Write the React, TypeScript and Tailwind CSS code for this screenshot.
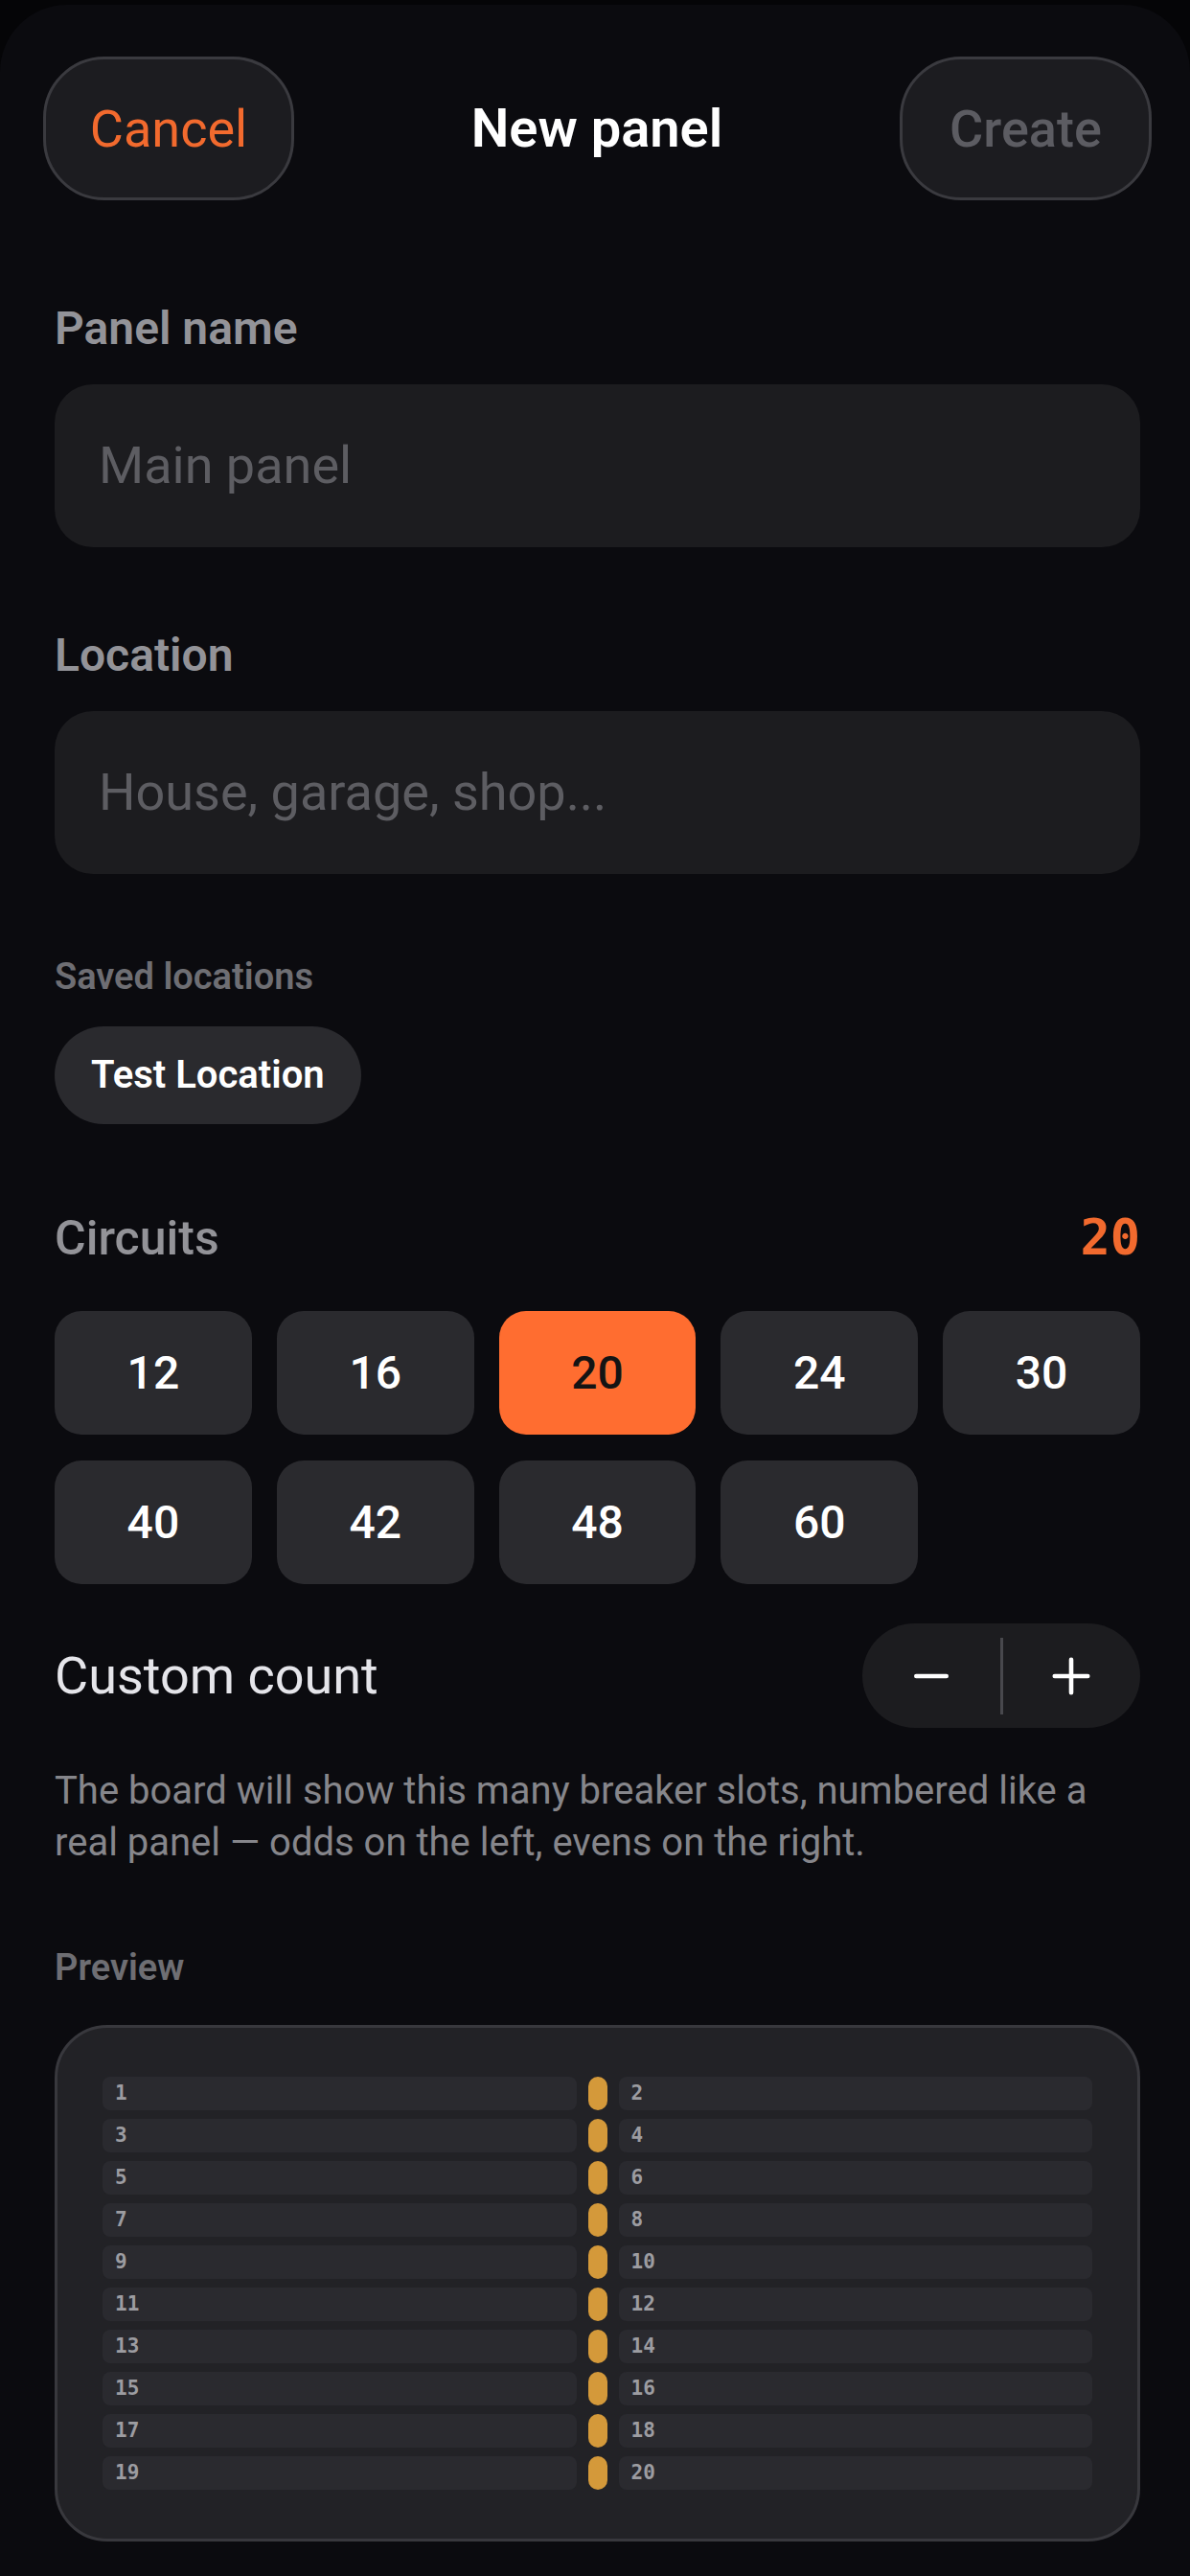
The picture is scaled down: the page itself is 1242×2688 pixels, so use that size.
import { useState } from "react";

const presets = [12, 16, 20, 24, 30, 40, 42, 48, 60];

const sans = { fontFamily: "Roboto, 'Noto Sans', sans-serif" };
const mono = { fontFamily: "'DejaVu Sans Mono', 'Liberation Mono', monospace" };

function Field({ label, placeholder }: { label: string; placeholder: string }) {
  return (
    <div className="flex flex-col">
      <label className="text-[48px] font-semibold leading-none text-[#939398]">{label}</label>
      <div className="mt-[34px] flex h-[170px] items-center rounded-[40px] bg-[#1c1c1f] px-[46px]">
        <span className="text-[54px] leading-none text-[#5d5d62]">{placeholder}</span>
      </div>
    </div>
  );
}

export default function App() {
  const [count, setCount] = useState(20);

  const slots = Array.from({ length: count / 2 }, (_, i) => i);

  return (
    <div className="min-h-screen w-full bg-[#050507] pt-[5px]" style={sans}>
      <div className="min-h-[2683px] rounded-t-[70px] bg-[#0b0b0f] pb-[40px]">
        {/* header */}
        <div className="flex items-center justify-between pl-[45px] pr-[40px] pt-[54px]">
          <button className="flex h-[150px] w-[262px] items-center justify-center rounded-[64px] border-[3px] border-[#3a3a3f] bg-[#1c1c20] text-[54px] text-[#f26a2e]">
            Cancel
          </button>
          <h1 className="text-[56px] font-semibold leading-none text-white">New panel</h1>
          <button className="flex h-[150px] w-[263px] items-center justify-center rounded-[64px] border-[3px] border-[#3a3a3f] bg-[#1c1c20] text-[54px] font-medium text-[#5c5c62]">
            Create
          </button>
        </div>

        <div className="flex flex-col pl-[57px] pr-[52px] pt-[110px]">
          <Field label="Panel name" placeholder="Main panel" />
          <div className="mt-[89px]">
            <Field label="Location" placeholder="House, garage, shop..." />
          </div>

          <div className="mt-[88px] text-[38px] font-semibold leading-none text-[#6e6e73]">Saved locations</div>
          <div className="mt-[33px] flex">
            <button className="flex h-[102px] items-center rounded-full bg-[#2a2a2e] px-[38px] text-[40px] font-semibold text-white">
              Test Location
            </button>
          </div>

          {/* circuits */}
          <div className="mt-[92px] flex items-baseline justify-between">
            <span className="text-[50px] font-medium leading-none text-[#939398]">Circuits</span>
            <span className="text-[52px] font-bold leading-none text-[#f26a2e]" style={mono}>
              {count}
            </span>
          </div>
          <div className="mt-[51px] grid grid-cols-5 gap-x-[26px] gap-y-[27px]">
            {presets.map((n) => (
              <button
                key={n}
                onClick={() => setCount(n)}
                className={
                  n === count
                    ? "flex h-[129px] items-center justify-center rounded-[28px] bg-[#ff6d30] text-[48px] font-medium text-[#141414]"
                    : "flex h-[129px] items-center justify-center rounded-[28px] bg-[#2a2a2e] text-[48px] font-medium text-white"
                }
              >
                {n}
              </button>
            ))}
          </div>

          {/* custom count */}
          <div className="mt-[41px] flex items-center justify-between">
            <span className="text-[54px] leading-none text-[#e5e5ea]">Custom count</span>
            <div className="flex h-[109px] w-[290px] items-center rounded-full bg-[#1c1c1f]">
              <button
                onClick={() => setCount((c) => Math.max(2, c - 2))}
                className="flex h-full flex-1 items-center justify-center"
              >
                <svg width="42" height="42" viewBox="0 0 24 24" fill="none" stroke="white" strokeWidth="2.6" strokeLinecap="round">
                  <path d="M3 12h18" />
                </svg>
              </button>
              <div className="h-[80px] w-[3px] bg-[#48484d]" />
              <button
                onClick={() => setCount((c) => Math.min(84, c + 2))}
                className="flex h-full flex-1 items-center justify-center"
              >
                <svg width="46" height="46" viewBox="0 0 24 24" fill="none" stroke="white" strokeWidth="2.4" strokeLinecap="round">
                  <path d="M3 12h18M12 3v18" />
                </svg>
              </button>
            </div>
          </div>

          <p className="mt-[39px] text-[40px] leading-[54px] text-[#86868b]">
            The board will show this many breaker slots, numbered like a real panel — odds on the left, evens on the right.
          </p>

          <div className="mt-[84px] text-[38px] font-semibold leading-none text-[#6e6e73]">Preview</div>

          {/* board preview */}
          <div className="mt-[41px] rounded-[55px] border-[3px] border-[#38383d] bg-[#222226] px-[47px] py-[51px]">
            <div className="grid grid-cols-[1fr_20px_1fr] gap-x-[12px] gap-y-[9px]">
              {slots.map((i) => (
                <div key={i} className="contents">
                  <div className="flex h-[35px] items-center rounded-[8px] bg-[#2a2a2f] pl-[13px] text-[21px] font-bold text-[#9c9ca1]" style={mono}>
                    {i * 2 + 1}
                  </div>
                  <div className="h-[35px] rounded-full bg-[#d4993a]" />
                  <div className="flex h-[35px] items-center rounded-[8px] bg-[#2a2a2f] pl-[13px] text-[21px] font-bold text-[#9c9ca1]" style={mono}>
                    {i * 2 + 2}
                  </div>
                </div>
              ))}
            </div>
          </div>
        </div>
      </div>
    </div>
  );
}
